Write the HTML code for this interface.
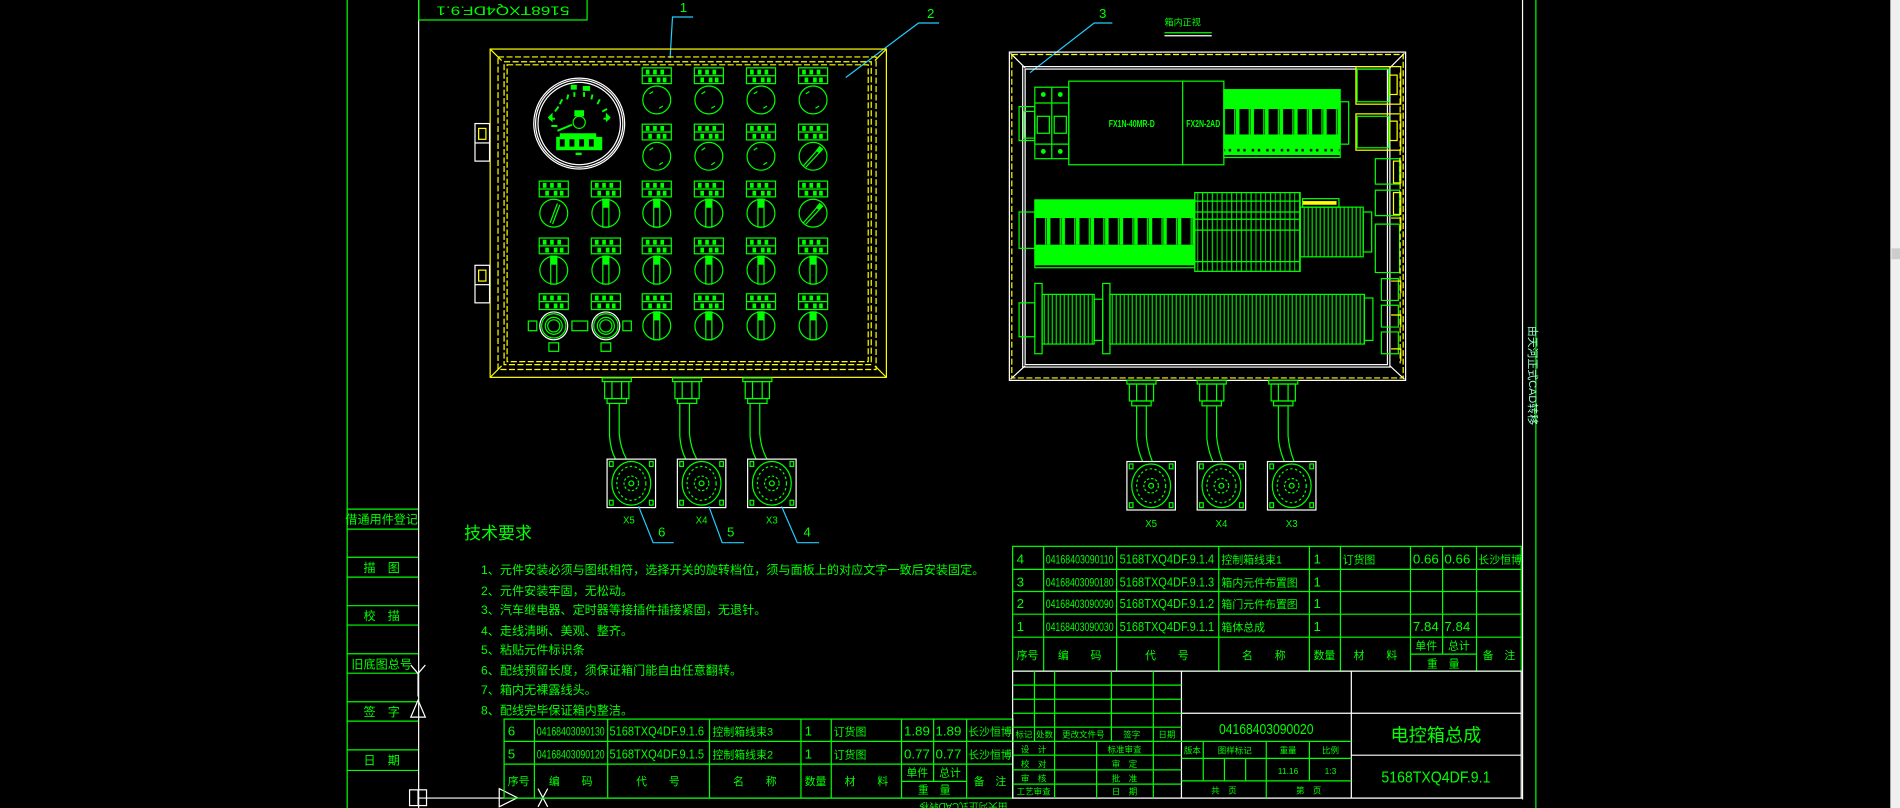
<!DOCTYPE html>
<html><head><meta charset="utf-8">
<style>
html,body{margin:0;padding:0;background:#000;overflow:hidden}
svg{display:block}
text{font-family:"Liberation Sans","Noto Sans CJK SC",sans-serif}
.g{stroke:#00ff00;fill:none;stroke-width:1}
.w{stroke:#fff;fill:none;stroke-width:1}
.y{stroke:#ffff00;fill:none;stroke-width:1}
.yd{stroke:#ffff00;fill:none;stroke-width:1;stroke-dasharray:5 2}
.c{stroke:#22ccff;fill:none;stroke-width:1}
.t{fill:#00ff00;font-size:10px}
</style></head>
<body>
<svg width="1900" height="808" viewBox="0 0 1568 667" preserveAspectRatio="none" xmlns="http://www.w3.org/2000/svg">
<defs>
<g id="k0"><circle r="11.5" class="g" stroke-width="1.6"/><path d="M-6 -5 L-3 -7 M5 5 L2 7" class="g"/></g>
<g id="k1"><circle r="11.5" class="g" stroke-width="1.6"/><rect x="-2.5" y="-11.5" width="5" height="23" class="g"/><rect x="-2.5" y="-11.5" width="5" height="7" fill="#00ff00"/></g>
<g id="k2"><circle r="11.5" class="g" stroke-width="1.6"/><path d="M-8 8 L6 -8 M-6 9 L8 -6" class="g"/><rect x="3" y="-8" width="4" height="5" fill="#00ff00" transform="rotate(40 5 -5)"/></g>
<g id="kb"><circle r="11.5" class="w"/><circle r="10" class="g" stroke-width="1.4"/><circle r="7" class="g"/><circle r="5" class="g"/></g>
<g id="lb"><rect x="-12" y="-6.5" width="24" height="13" class="g"/><line x1="-12" y1="0" x2="12" y2="0" class="g"/><rect x="-9" y="-5" width="3" height="4" fill="#00ff00"/><rect x="-3" y="-5" width="3" height="4" fill="#00ff00"/><rect x="3" y="-5" width="3" height="4" fill="#00ff00"/><rect x="-7" y="1.5" width="3" height="4" fill="#00ff00"/><rect x="0" y="1.5" width="3" height="4" fill="#00ff00"/><rect x="5" y="1.5" width="3" height="4" fill="#00ff00"/></g>
<g id="gl"><rect x="-12" y="0" width="24" height="3" class="g"/><rect x="-10" y="3" width="20" height="14" class="g"/><line x1="-4" y1="3" x2="-4" y2="17" class="g"/><line x1="4" y1="3" x2="4" y2="17" class="g"/><rect x="-8" y="17" width="16" height="4" class="g"/></g>
<g id="cn"><rect x="-20" y="0" width="40" height="40" class="w"/><ellipse cx="0" cy="20" rx="16" ry="18" class="g" stroke-width="2"/><ellipse cx="0" cy="20" rx="12" ry="14" class="g" stroke-dasharray="2 2"/><circle cx="0" cy="20" r="6" class="g" stroke-dasharray="2 1.5"/><circle cx="0" cy="20" r="2" class="g"/><rect x="-18" y="2" width="3" height="4" class="g"/><rect x="15" y="2" width="3" height="4" class="g"/><rect x="-18" y="34" width="3" height="4" class="g"/><rect x="15" y="34" width="3" height="4" class="g"/></g>
<pattern id="rl" width="12" height="60" patternUnits="userSpaceOnUse"><rect width="12" height="60" fill="#00ff00"/><rect x="1" y="3" width="2" height="2" fill="#000"/><rect x="6" y="3" width="2" height="2" fill="#000"/><rect x="1" y="9" width="2" height="2" fill="#000"/><rect x="6" y="9" width="2" height="2" fill="#000"/></pattern>
<pattern id="vb" width="12" height="40" patternUnits="userSpaceOnUse"><rect x="0" y="0" width="3" height="40" fill="#00ff00"/><rect x="3" width="9" height="40" fill="#000"/><line x1="11" y1="0" x2="11" y2="40" stroke="#00ff00"/></pattern>
<pattern id="ts" width="3.3" height="60" patternUnits="userSpaceOnUse"><line x1="0.5" y1="0" x2="0.5" y2="60" stroke="#00ff00" stroke-width="0.9"/></pattern>
<pattern id="ts2" width="8" height="60" patternUnits="userSpaceOnUse"><line x1="0.5" y1="0" x2="0.5" y2="60" stroke="#00ff00" stroke-width="0.9"/><line x1="4.5" y1="0" x2="4.5" y2="60" stroke="#00ff00" stroke-width="0.7"/></pattern>
</defs>
<rect width="1568" height="667" fill="#000"/>

<!-- frame lines -->
<line x1="286.5" y1="0" x2="286.5" y2="667" class="g"/>
<line x1="345.5" y1="0" x2="345.5" y2="667" class="w"/>
<line x1="1256.5" y1="0" x2="1256.5" y2="660" class="w"/>
<line x1="1267.5" y1="0" x2="1267.5" y2="667" class="g"/>
<line x1="345" y1="658.8" x2="1256" y2="658.8" class="w"/>
<text x="1259" y="272" fill="#99ffcc" font-size="9" transform="rotate(90 1262 272)">由天河正式CAD转移</text>

<!-- scrollbar -->
<rect x="1560" y="0" width="8" height="667" fill="#f0f0f0"/>
<rect x="1561" y="205" width="7" height="9" fill="#cdcdcd"/>

<!-- top label -->
<rect x="345.5" y="-1" width="139" height="17.5" class="g"/>
<text x="415" y="8" text-anchor="middle" dominant-baseline="middle" class="t" font-size="14" textLength="110" lengthAdjust="spacingAndGlyphs" transform="rotate(180 415 8)">5168TXQ4DF.9.1</text>

<!-- leaders -->
<path d="M553 48 L555 14 L572 14" class="c"/>
<text x="561" y="10" fill="#00ff00" font-size="11">1</text>
<path d="M698 64 L758 19 L775 19" class="c"/>
<text x="765" y="15" fill="#00ff00" font-size="11">2</text>
<path d="M850 60 L903 19 L918 19" class="c"/>
<text x="907" y="15" fill="#00ff00" font-size="11">3</text>
<text x="976" y="21" text-anchor="middle" fill="#00ff00" font-size="7.5">箱内正视</text>
<line x1="961" y1="27" x2="1000" y2="27" class="g"/><line x1="961" y1="29.5" x2="1000" y2="29.5" class="w"/>

<!-- LEFT PANEL -->
<rect x="404.5" y="40.5" width="327" height="271" class="y" stroke-width="1.4"/>
<rect x="411" y="47" width="312" height="258" class="yd"/>
<rect x="416" y="51" width="303" height="250" class="yd"/>
<rect x="418.5" y="53.5" width="298" height="245" class="yd"/>
<path d="M405 41 L414 50 M731 41 L722 50 M405 311 L414 302 M731 311 L722 302" class="y"/>
<rect x="392" y="102" width="12" height="31" class="w"/><line x1="392" y1="118" x2="404" y2="118" class="w"/><rect x="395" y="106" width="6" height="9" class="y"/>
<rect x="392" y="219" width="12" height="31" class="w"/><line x1="392" y1="235" x2="404" y2="235" class="w"/><rect x="395" y="223" width="6" height="9" class="y"/>
<!-- gauge -->
<circle cx="478" cy="102" r="37.5" class="w"/><circle cx="478" cy="102" r="36" class="w"/><circle cx="478" cy="102" r="34" class="w"/>
<circle cx="478" cy="101" r="5" class="g" stroke-width="1.6"/>
<path d="M458 92 l3 -4 M462 86 l2 -4 M468 82 l1 -4 M474 80 l0 -4 M482 80 l0 -4 M488 82 l1 -4 M493 86 l2 -4 M497 92 l4 -2 M458 98 l-5 0 M498 98 l5 0 M455 104 l5 0 M472 103 l-12 5" stroke="#00ff00" stroke-width="1.6"/>
<rect x="474" y="91" width="8" height="5" fill="#00ff00"/><rect x="471" y="70" width="5" height="4" fill="#00ff00"/><rect x="481" y="71" width="6" height="4" fill="#00ff00"/>
<path d="M452 97 l4 -4 l0 8 z M504 97 l-4 -4 l0 8 z" fill="#00ff00"/>
<rect x="459" y="113" width="38" height="11" fill="#00ff00"/><rect x="462" y="110" width="30" height="4" fill="#00ff00"/>
<path d="M462 115 h4 v6 h-4z M470 115 h4 v6 h-4z M478 115 h4 v6 h-4z M486 115 h4 v6 h-4z" fill="#000"/>
<rect x="475" y="126" width="5" height="2" fill="#00ff00"/>
<!-- knobs -->
<use href="#lb" x="542" y="62.5"/><use href="#lb" x="585" y="62.5"/><use href="#lb" x="628" y="62.5"/><use href="#lb" x="671" y="62.5"/>
<use href="#k0" x="542" y="82.5"/><use href="#k0" x="585" y="82.5"/><use href="#k0" x="628" y="82.5"/><use href="#k0" x="671" y="82.5"/>
<use href="#lb" x="542" y="109"/><use href="#lb" x="585" y="109"/><use href="#lb" x="628" y="109"/><use href="#lb" x="671" y="109"/>
<use href="#k0" x="542" y="129"/><use href="#k0" x="585" y="129"/><use href="#k0" x="628" y="129"/><use href="#k2" x="671" y="129"/>
<use href="#lb" x="457" y="156"/><use href="#lb" x="500" y="156"/><use href="#lb" x="542" y="156"/><use href="#lb" x="585" y="156"/><use href="#lb" x="628" y="156"/><use href="#lb" x="671" y="156"/>
<g transform="translate(457 176)"><circle r="11.5" class="g" stroke-width="1.6"/><path d="M-3 8 L3 -8 M-1 9 L5 -7" class="g"/></g>
<use href="#k1" x="500" y="176"/><use href="#k1" x="542" y="176"/><use href="#k1" x="585" y="176"/><use href="#k1" x="628" y="176"/><use href="#k2" x="671" y="176"/>
<use href="#lb" x="457" y="203"/><use href="#lb" x="500" y="203"/><use href="#lb" x="542" y="203"/><use href="#lb" x="585" y="203"/><use href="#lb" x="628" y="203"/><use href="#lb" x="671" y="203"/>
<use href="#k1" x="457" y="223"/><use href="#k1" x="500" y="223"/><use href="#k1" x="542" y="223"/><use href="#k1" x="585" y="223"/><use href="#k1" x="628" y="223"/><use href="#k1" x="671" y="223"/>
<use href="#lb" x="457" y="249"/><use href="#lb" x="500" y="249"/><use href="#lb" x="542" y="249"/><use href="#lb" x="585" y="249"/><use href="#lb" x="628" y="249"/><use href="#lb" x="671" y="249"/>
<use href="#kb" x="457" y="269"/><use href="#kb" x="500" y="269"/>
<use href="#k1" x="542" y="269"/><use href="#k1" x="585" y="269"/><use href="#k1" x="628" y="269"/><use href="#k1" x="671" y="269"/>
<rect x="436" y="265" width="7" height="8" class="g"/><rect x="472" y="265" width="13" height="8" class="g"/><rect x="514" y="265" width="7" height="8" class="g"/>
<rect x="453" y="283" width="8" height="7" class="g"/><rect x="496" y="283" width="8" height="7" class="g"/>

<!-- left connectors -->
<use href="#gl" x="509" y="312"/><use href="#gl" x="567" y="312"/><use href="#gl" x="625" y="312"/>
<path d="M503 333 L503 360 Q504 372 508 379 M511 333 L511 358 Q512 370 517 379" class="g"/>
<path d="M561 333 L561 360 Q562 372 566 379 M569 333 L569 358 Q570 370 575 379" class="g"/>
<path d="M619 333 L619 360 Q620 372 624 379 M627 333 L627 358 Q628 370 633 379" class="g"/>
<use href="#cn" x="521" y="379"/><use href="#cn" x="579" y="379"/><use href="#cn" x="637" y="379"/>
<text x="519" y="432" text-anchor="middle" fill="#00ff00" font-size="8">X5</text>
<text x="579" y="432" text-anchor="middle" fill="#00ff00" font-size="8">X4</text>
<text x="637" y="432" text-anchor="middle" fill="#00ff00" font-size="8">X3</text>
<path d="M527 418 L539 448 L556 448" class="c"/><text x="543" y="443" fill="#00ff00" font-size="11">6</text>
<path d="M585 418 L596 448 L614 448" class="c"/><text x="600" y="443" fill="#00ff00" font-size="11">5</text>
<path d="M645 418 L658 448 L676 448" class="c"/><text x="663" y="443" fill="#00ff00" font-size="11">4</text>

<!-- RIGHT PANEL -->
<rect x="833" y="43" width="327" height="271" class="w" stroke-width="1.2"/>
<path d="M834 44 L846 56 M1159 44 L1147 56 M834 313 L846 302 M1159 313 L1147 302" class="w"/>
<rect x="835" y="45" width="323" height="267" class="yd"/>
<rect x="844" y="55" width="303" height="248" class="w"/>
<rect x="846" y="57" width="299" height="244" class="w"/>
<!-- breaker -->
<rect x="854" y="72" width="28" height="59" class="g"/><line x1="868" y1="72" x2="868" y2="131" class="g"/>
<line x1="854" y1="85" x2="882" y2="85" class="g"/><line x1="854" y1="119" x2="882" y2="119" class="g"/>
<rect x="856" y="96" width="10" height="14" class="g"/><rect x="870" y="96" width="10" height="14" class="g"/>
<circle cx="861" cy="78" r="2" fill="#00ff00"/><circle cx="875" cy="78" r="2" fill="#00ff00"/><circle cx="861" cy="125" r="2" fill="#00ff00"/><circle cx="875" cy="125" r="2" fill="#00ff00"/>
<rect x="841" y="88" width="13" height="28" class="g"/><rect x="845" y="92" width="9" height="22" class="g"/>
<!-- PLC -->
<rect x="882" y="67" width="128" height="69" class="g"/><line x1="976" y1="67" x2="976" y2="136" class="g"/>
<text x="934" y="105" text-anchor="middle" fill="#00ff00" font-size="8" font-weight="bold" textLength="38" lengthAdjust="spacingAndGlyphs">FX1N-40MR-D</text>
<text x="993" y="105" text-anchor="middle" fill="#00ff00" font-size="8" font-weight="bold" textLength="28" lengthAdjust="spacingAndGlyphs">FX2N-2AD</text>
<!-- relay block 1 -->
<rect x="1010" y="74" width="96" height="16" fill="url(#rl)"/>
<rect x="1010" y="90" width="96" height="21" fill="url(#vb)"/>
<rect x="1010" y="111" width="96" height="17" fill="url(#rl)"/>
<rect x="1010" y="74" width="96" height="56" class="g"/>
<rect x="1106" y="84" width="7" height="35" class="g"/>
<!-- right components -->
<rect x="1119" y="55" width="37" height="31" class="y"/><rect x="1120" y="57" width="26" height="27" class="g"/><rect x="1147" y="62" width="6" height="16" class="y"/>
<rect x="1119" y="94" width="37" height="30" class="y"/><rect x="1120" y="96" width="26" height="26" class="g"/><rect x="1147" y="100" width="6" height="16" class="y"/>
<rect x="1135" y="131" width="20" height="21" class="g"/><rect x="1150" y="133" width="6" height="18" class="y"/>
<rect x="1135" y="157" width="20" height="21" class="g"/><rect x="1150" y="159" width="6" height="18" class="y"/>
<path d="M1135 185 h20 v40 h-20z" class="g"/><path d="M1140 230 h14 v18 h-14z M1140 252 h14 v18 h-14z M1140 274 h14 v18 h-14z" class="g"/>
<path d="M1148 180 h8 v10 M1148 232 h8 v10 M1148 260 h8 v10 M1148 288 h8 v10" class="y"/>
<line x1="1155.5" y1="60" x2="1155.5" y2="300" class="yd"/>
<!-- row2 relays -->
<rect x="854" y="165" width="132" height="15" fill="url(#rl)"/>
<rect x="854" y="180" width="132" height="22" fill="url(#vb)"/>
<rect x="854" y="202" width="132" height="17" fill="url(#rl)"/>
<rect x="854" y="165" width="132" height="56" class="g"/>
<rect x="841" y="175" width="13" height="30" class="g"/>
<!-- terminal block -->
<rect x="986" y="159" width="87" height="65" class="g"/>
<rect x="986" y="159" width="87" height="65" fill="url(#ts2)"/>
<line x1="986" y1="166" x2="1073" y2="166" class="g"/><line x1="986" y1="175" x2="1073" y2="175" class="g"/><line x1="986" y1="181" x2="1073" y2="181" class="g"/><line x1="986" y1="190" x2="1073" y2="190" class="g"/><line x1="986" y1="216" x2="1073" y2="216" class="g"/>
<rect x="1073" y="171" width="52" height="41" class="g"/><rect x="1073" y="171" width="52" height="41" fill="url(#ts)"/>
<rect x="1075" y="164" width="30" height="7" class="g"/><rect x="1075" y="166" width="28" height="3" fill="#ffff00"/>
<rect x="1125" y="175" width="7" height="33" class="g"/>
<!-- row3 terminal strip -->
<rect x="854" y="234" width="6" height="58" class="g"/>
<rect x="860" y="243" width="43" height="41" class="g"/><rect x="860" y="243" width="43" height="41" fill="url(#ts)"/>
<rect x="903" y="247" width="7" height="34" class="g"/>
<rect x="910" y="234" width="6" height="58" class="g"/>
<rect x="916" y="243" width="210" height="41" class="g"/><rect x="916" y="243" width="210" height="41" fill="url(#ts)"/>
<rect x="1126" y="246" width="7" height="35" class="g"/>
<rect x="841" y="250" width="13" height="28" class="g"/>
<!-- right connectors -->
<use href="#gl" x="942" y="314"/><use href="#gl" x="1000" y="314"/><use href="#gl" x="1059" y="314"/>
<path d="M938 335 L938 362 Q939 372 943 381 M946 335 L946 360 Q947 371 951 381" class="g"/>
<path d="M996 335 L996 362 Q997 372 1001 381 M1004 335 L1004 360 Q1005 371 1009 381" class="g"/>
<path d="M1055 335 L1055 362 Q1056 372 1060 381 M1063 335 L1063 360 Q1064 371 1068 381" class="g"/>
<use href="#cn" x="950" y="381"/><use href="#cn" x="1008" y="381"/><use href="#cn" x="1066" y="381"/>
<text x="950" y="435" text-anchor="middle" fill="#00ff00" font-size="8">X5</text>
<text x="1008" y="435" text-anchor="middle" fill="#00ff00" font-size="8">X4</text>
<text x="1066" y="435" text-anchor="middle" fill="#00ff00" font-size="8">X3</text>

<!-- left margin table -->
<g class="g">
<line x1="286" y1="420.3" x2="345" y2="420.3"/><line x1="286" y1="436.8" x2="345" y2="436.8"/>
<line x1="286" y1="460" x2="345" y2="460"/><line x1="286" y1="476.4" x2="345" y2="476.4"/>
<line x1="286" y1="500" x2="345" y2="500"/><line x1="286" y1="516" x2="345" y2="516"/>
<line x1="286" y1="539.7" x2="345" y2="539.7"/><line x1="286" y1="555.7" x2="345" y2="555.7"/>
<line x1="286" y1="579.3" x2="345" y2="579.3"/><line x1="286" y1="595.3" x2="345" y2="595.3"/>
<line x1="286" y1="619" x2="345" y2="619"/><line x1="286" y1="636" x2="345" y2="636"/>
</g>
<g fill="#00ff00" font-size="10" text-anchor="middle">
<text x="315" y="432">借通用件登记</text>
<text x="315" y="472">描　图</text>
<text x="315" y="512">校　描</text>
<text x="315" y="552">旧底图总号</text>
<text x="315" y="591">签　字</text>
<text x="315" y="631">日　期</text>
</g>
<!-- UCS icon -->
<path d="M339 549 L345 556 L351 549 M345 556 L345 575" class="w"/>
<path d="M345 578 L339 592 L351 592 Z" class="w"/>
<rect x="338" y="652" width="14" height="13" class="w"/><line x1="345" y1="652" x2="345" y2="665" class="w"/>
<path d="M412 651 L427 658.5 L412 666 Z" class="w"/>
<path d="M444 651 L452 666 M452 651 L444 666" class="w"/>

<!-- tech requirements -->
<text x="383" y="445" fill="#00ff00" font-size="14">技术要求</text>
<g fill="#00ff00" font-size="10">
<text x="397" y="474">1、元件安装必须与图纸相符，选择开关的旋转档位，须与面板上的对应文字一致后安装固定。</text>
<text x="397" y="491">2、元件安装牢固，无松动。</text>
<text x="397" y="507">3、汽车继电器、定时器等接插件插接紧固，无退针。</text>
<text x="397" y="524">4、走线清晰、美观、整齐。</text>
<text x="397" y="540">5、粘贴元件标识条</text>
<text x="397" y="557">6、配线预留长度，须保证箱门能自由任意翻转。</text>
<text x="397" y="573">7、箱内无裸露线头。</text>
<text x="397" y="590">8、配线完毕保证箱内整洁。</text>
</g>

<!-- bottom-left BOM -->
<g class="g">
<rect x="416" y="593.6" width="420" height="65.2"/>
<line x1="416" y1="612" x2="836" y2="612"/><line x1="416" y1="630.8" x2="836" y2="630.8"/>
<line x1="441" y1="593.6" x2="441" y2="658.8"/><line x1="501.5" y1="593.6" x2="501.5" y2="658.8"/>
<line x1="585.5" y1="593.6" x2="585.5" y2="658.8"/><line x1="661" y1="593.6" x2="661" y2="658.8"/>
<line x1="686" y1="593.6" x2="686" y2="658.8"/><line x1="744" y1="593.6" x2="744" y2="658.8"/>
<line x1="770.5" y1="593.6" x2="770.5" y2="645"/><line x1="797.7" y1="593.6" x2="797.7" y2="658.8"/>
<line x1="744" y1="645" x2="797.7" y2="645"/>
</g>
<g fill="#00ff00" font-size="11">
<text x="419" y="607">6</text><text x="443" y="607" font-size="10" textLength="56" lengthAdjust="spacingAndGlyphs">04168403090130</text><text x="503" y="607" textLength="78" lengthAdjust="spacingAndGlyphs">5168TXQ4DF.9.1.6</text><text x="588" y="607" font-size="9">控制箱线束3</text><text x="664" y="607">1</text><text x="688" y="607" font-size="9">订货图</text><text x="746" y="607">1.89</text><text x="772" y="607">1.89</text><text x="799" y="607" font-size="9">长沙恒博</text>
<text x="419" y="626">5</text><text x="443" y="626" font-size="10" textLength="56" lengthAdjust="spacingAndGlyphs">04168403090120</text><text x="503" y="626" textLength="78" lengthAdjust="spacingAndGlyphs">5168TXQ4DF.9.1.5</text><text x="588" y="626" font-size="9">控制箱线束2</text><text x="664" y="626">1</text><text x="688" y="626" font-size="9">订货图</text><text x="746" y="626">0.77</text><text x="772" y="626">0.77</text><text x="799" y="626" font-size="9">长沙恒博</text>
</g>
<g fill="#00ff00" font-size="9" text-anchor="middle">
<text x="428" y="648">序号</text><text x="471" y="648">编　　码</text><text x="543" y="648">代　　号</text><text x="623" y="648">名　　称</text><text x="673" y="648">数量</text><text x="715" y="648">材　　料</text><text x="757" y="641">单件</text><text x="784" y="641">总计</text><text x="771" y="655">重　量</text><text x="817" y="648">备　注</text>
</g>
<text x="795" y="663" text-anchor="middle" fill="#00ff00" font-size="8" transform="rotate(180 795 663)">由天河正式CAD转移</text>

<!-- right BOM -->
<g class="g">
<rect x="835.7" y="451" width="419.7" height="103"/>
<line x1="835.7" y1="470" x2="1255.4" y2="470"/><line x1="835.7" y1="488.3" x2="1255.4" y2="488.3"/>
<line x1="835.7" y1="507" x2="1255.4" y2="507"/><line x1="835.7" y1="526" x2="1255.4" y2="526"/>
<line x1="861.3" y1="451" x2="861.3" y2="554"/><line x1="921.5" y1="451" x2="921.5" y2="554"/>
<line x1="1005.8" y1="451" x2="1005.8" y2="554"/><line x1="1080.6" y1="451" x2="1080.6" y2="554"/>
<line x1="1106.2" y1="451" x2="1106.2" y2="554"/><line x1="1164" y1="451" x2="1164" y2="554"/>
<line x1="1190.5" y1="451" x2="1190.5" y2="540"/><line x1="1218.5" y1="451" x2="1218.5" y2="554"/>
<line x1="1164" y1="540" x2="1218.5" y2="540"/>
</g>
<g fill="#00ff00" font-size="11">
<text x="839" y="465">4</text><text x="863" y="465" font-size="10" textLength="56" lengthAdjust="spacingAndGlyphs">04168403090110</text><text x="924" y="465" textLength="78" lengthAdjust="spacingAndGlyphs">5168TXQ4DF.9.1.4</text><text x="1008" y="465" font-size="9">控制箱线束1</text><text x="1084" y="465">1</text><text x="1108" y="465" font-size="9">订货图</text><text x="1166" y="465">0.66</text><text x="1192" y="465">0.66</text><text x="1220" y="465" font-size="9">长沙恒博</text>
<text x="839" y="484">3</text><text x="863" y="484" font-size="10" textLength="56" lengthAdjust="spacingAndGlyphs">04168403090180</text><text x="924" y="484" textLength="78" lengthAdjust="spacingAndGlyphs">5168TXQ4DF.9.1.3</text><text x="1008" y="484" font-size="9">箱内元件布置图</text><text x="1084" y="484">1</text>
<text x="839" y="502">2</text><text x="863" y="502" font-size="10" textLength="56" lengthAdjust="spacingAndGlyphs">04168403090090</text><text x="924" y="502" textLength="78" lengthAdjust="spacingAndGlyphs">5168TXQ4DF.9.1.2</text><text x="1008" y="502" font-size="9">箱门元件布置图</text><text x="1084" y="502">1</text>
<text x="839" y="521">1</text><text x="863" y="521" font-size="10" textLength="56" lengthAdjust="spacingAndGlyphs">04168403090030</text><text x="924" y="521" textLength="78" lengthAdjust="spacingAndGlyphs">5168TXQ4DF.9.1.1</text><text x="1008" y="521" font-size="9">箱体总成</text><text x="1084" y="521">1</text><text x="1166" y="521">7.84</text><text x="1192" y="521">7.84</text>
</g>
<g fill="#00ff00" font-size="9" text-anchor="middle">
<text x="848" y="544">序号</text><text x="891" y="544">编　　码</text><text x="963" y="544">代　　号</text><text x="1043" y="544">名　　称</text><text x="1093" y="544">数量</text><text x="1135" y="544">材　　料</text><text x="1177" y="536">单件</text><text x="1204" y="536">总计</text><text x="1191" y="551">重　量</text><text x="1237" y="544">备　注</text>
</g>

<!-- title block -->
<rect x="835.7" y="554" width="419.7" height="104.8" class="w"/>
<line x1="975" y1="554" x2="975" y2="658.8" class="w"/>
<line x1="1115.2" y1="554" x2="1115.2" y2="658.8" class="w"/>
<line x1="975" y1="588.8" x2="1255.4" y2="588.8" class="w"/>
<line x1="1115.2" y1="623.4" x2="1255.4" y2="623.4" class="w"/>
<g class="g">
<line x1="835.7" y1="565.6" x2="975" y2="565.6"/><line x1="835.7" y1="577.2" x2="975" y2="577.2"/>
<line x1="835.7" y1="588.8" x2="975" y2="588.8"/><line x1="835.7" y1="600.3" x2="975" y2="600.3"/>
<line x1="835.7" y1="612" x2="1115.2" y2="612"/>
<line x1="853.7" y1="554" x2="853.7" y2="612"/><line x1="870.3" y1="554" x2="870.3" y2="658.8"/>
<line x1="917.2" y1="554" x2="917.2" y2="612"/><line x1="951.8" y1="554" x2="951.8" y2="658.8"/>
<line x1="905" y1="612" x2="905" y2="658.8"/>
<line x1="835.7" y1="623.4" x2="975" y2="623.4"/><line x1="835.7" y1="635.5" x2="975" y2="635.5"/><line x1="835.7" y1="647.3" x2="975" y2="647.3"/>
<line x1="975" y1="626" x2="1115.2" y2="626"/><line x1="975" y1="644.6" x2="1115.2" y2="644.6"/>
<line x1="993" y1="612" x2="993" y2="644.6"/><line x1="1010.5" y1="626" x2="1010.5" y2="644.6"/><line x1="1028" y1="626" x2="1028" y2="644.6"/>
<line x1="1045" y1="612" x2="1045" y2="658.8"/><line x1="1080.6" y1="612" x2="1080.6" y2="644.6"/>
</g>
<g fill="#00ff00" font-size="7" text-anchor="middle">
<text x="845" y="609">标记</text><text x="862" y="609">处数</text><text x="894" y="609">更改文件号</text><text x="934" y="609">签字</text><text x="963" y="609">日期</text>
<text x="853" y="621">设　计</text><text x="928" y="621">标准审查</text>
<text x="853" y="633">校　对</text><text x="928" y="633">审　定</text>
<text x="853" y="645">审　核</text><text x="928" y="645">批　准</text>
<text x="853" y="656">工艺审查</text><text x="928" y="656">日　期</text>
<text x="984" y="622">版本</text><text x="1019" y="622">图样标记</text><text x="1063" y="622">重量</text><text x="1098" y="622">比例</text>
<text x="1063" y="639">11.16</text><text x="1098" y="639">1:3</text>
<text x="1010" y="655">共　页</text><text x="1080" y="655">第　页</text>
</g>
<text x="1045" y="606" text-anchor="middle" fill="#00ff00" font-size="12" textLength="78" lengthAdjust="spacingAndGlyphs">04168403090020</text>
<text x="1185" y="612" text-anchor="middle" fill="#00ff00" font-size="15">电控箱总成</text>
<text x="1185" y="646" text-anchor="middle" fill="#00ff00" font-size="13" textLength="90" lengthAdjust="spacingAndGlyphs">5168TXQ4DF.9.1</text>
</svg>
</body></html>
